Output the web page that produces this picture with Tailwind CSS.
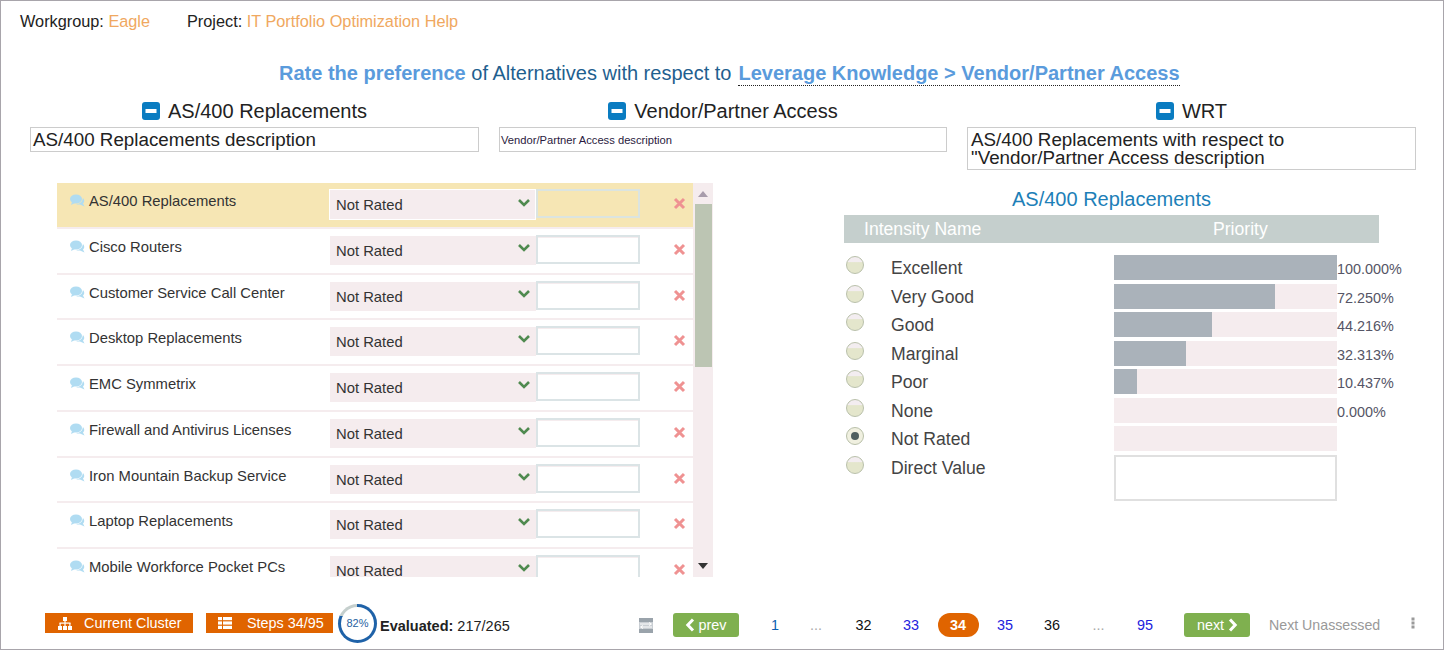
<!doctype html>
<html><head><meta charset="utf-8"><script src="https://cdn.jsdelivr.net/npm/@tailwindcss/browser@4"></script></head>
<body class="m-0">
<div class="w-[1444px] h-[650px] overflow-hidden border border-[#a8a5ab] bg-white font-['Liberation_Sans',Arial,sans-serif] text-[#222] flex flex-col">
  <div class="h-[39px] pl-[19px] pt-[10px] text-[16.3px] leading-[20px] flex">
    <span class="w-[167px]">Workgroup: <span class="text-[#f0a860]">Eagle</span></span>
    <span>Project: <span class="text-[#f0a860]">IT Portfolio Optimization Help</span></span>
  </div>
  <div class="h-[47px] pt-[22px] pl-[278px] text-[20px] leading-[23px] text-[#1f5f8f] flex">
    <span class="whitespace-pre"><b class="text-[#5a9bdc]">Rate the preference</b> of Alternatives with respect to</span>
    <b class="text-[#5a9bdc] ml-[7px] h-[24px] border-b border-dotted border-[#222]">Leverage Knowledge &gt; Vendor/Partner Access</b>
  </div>
  <div class="grid grid-cols-[449px_448px_449px] gap-x-[20px] pl-[29px]">
    <div class="flex justify-center items-center h-[40px] pt-[9px] text-[20px] gap-[8px]">
      <svg width="18" height="18" viewBox="0 0 18 18"><rect width="18" height="18" rx="3" fill="#0a7cc1"/><rect x="3.5" y="7" width="11" height="4" fill="#fff"/></svg><span>AS/400 Replacements</span>
    </div>
    <div class="flex justify-center items-center h-[40px] pt-[9px] text-[20px] gap-[8px]">
      <svg width="18" height="18" viewBox="0 0 18 18"><rect width="18" height="18" rx="3" fill="#0a7cc1"/><rect x="3.5" y="7" width="11" height="4" fill="#fff"/></svg><span>Vendor/Partner Access</span>
    </div>
    <div class="flex justify-center items-center h-[40px] pt-[9px] text-[20px] gap-[8px]">
      <svg width="18" height="18" viewBox="0 0 18 18"><rect width="18" height="18" rx="3" fill="#0a7cc1"/><rect x="3.5" y="7" width="11" height="4" fill="#fff"/></svg><span>WRT</span>
    </div>
    <div class="h-[25px] border border-[#ccc] px-[2px] text-[18.8px] leading-[23px]">AS/400 Replacements description</div>
    <div class="h-[25px] border border-[#ccc] pl-[1px] text-[11.2px] leading-[25px] text-[#2a1a40]">Vendor/Partner Access description</div>
    <div class="h-[43px] border border-[#ccc] px-[3px] text-[18.8px] leading-[18px] pt-[3px]">AS/400 Replacements with respect to<br>"Vendor/Partner Access description</div>
  </div>
  <div class="flex h-[430px] mt-[13.25px]">
    <div class="ml-[56px] w-[656px] h-[393.75px] flex overflow-hidden">
      <div class="w-[636px]">
        <div class="h-[45.75px] border-b-2 border-[#f5ecee] bg-[#f6e6b4] relative flex">
          <div class="w-[272px] pl-[13px] pt-[10px] flex text-[14.8px] leading-[17px] text-[#333]"><svg class="mr-[4px] mt-[1px] shrink-0" width="15" height="13" viewBox="0 0 15 13"><ellipse cx="6" cy="5" rx="6" ry="4.6" fill="#b0dcf2"/><path d="M2 8 L1 11 L5 9Z" fill="#b0dcf2"/><path d="M13 4 Q15.5 7 13 9.5 L14.5 12.5 L10 10.5 Q7 10.5 6 10 Q12 10 13 4Z" fill="#b0dcf2"/></svg><span>AS/400 Replacements</span></div>
          <div class="mt-[6px] h-[31px] w-[207px] border border-white bg-[#f5ecee] pl-[6px] text-[14.8px] leading-[30px] text-[#333] relative">Not Rated<svg class="absolute left-[187px] top-[8px]" width="14" height="10" viewBox="0 0 14 10"><path d="M2 2 L7 7 L12 2" fill="none" stroke="#4f8a4f" stroke-width="2.6"/></svg></div>
          <div class="mt-[6px] h-[29px] w-[104px] border-2 border-[#dbe4e0]"></div>
          <div class="flex-1 flex pt-[14px] pl-[33px]"><svg width="13" height="13" viewBox="0 0 13 13"><path d="M2 2 L11 11 M11 2 L2 11" stroke="#ef9292" stroke-width="3"/></svg></div>
        </div>
        <div class="h-[45.75px] border-b-2 border-[#f5ecee] relative flex">
          <div class="w-[273px] pl-[13px] pt-[10px] flex text-[14.8px] leading-[17px] text-[#333]"><svg class="mr-[4px] mt-[1px] shrink-0" width="15" height="13" viewBox="0 0 15 13"><ellipse cx="6" cy="5" rx="6" ry="4.6" fill="#b0dcf2"/><path d="M2 8 L1 11 L5 9Z" fill="#b0dcf2"/><path d="M13 4 Q15.5 7 13 9.5 L14.5 12.5 L10 10.5 Q7 10.5 6 10 Q12 10 13 4Z" fill="#b0dcf2"/></svg><span>Cisco Routers</span></div>
          <div class="mt-[7px] h-[29px] w-[206px] bg-[#f5ecee] pl-[6px] text-[14.8px] leading-[30px] text-[#333] relative">Not Rated<svg class="absolute left-[187px] top-[7px]" width="14" height="10" viewBox="0 0 14 10"><path d="M2 2 L7 7 L12 2" fill="none" stroke="#4f8a4f" stroke-width="2.6"/></svg></div>
          <div class="mt-[6px] h-[29px] w-[104px] border-2 border-[#dbe4e6] bg-white shadow-[inset_0_1px_0_#f5ecee]"></div>
          <div class="flex-1 flex pt-[14px] pl-[33px]"><svg width="13" height="13" viewBox="0 0 13 13"><path d="M2 2 L11 11 M11 2 L2 11" stroke="#ef9292" stroke-width="3"/></svg></div>
        </div>
        <div class="h-[45.75px] border-b-2 border-[#f5ecee] relative flex">
          <div class="w-[273px] pl-[13px] pt-[10px] flex text-[14.8px] leading-[17px] text-[#333]"><svg class="mr-[4px] mt-[1px] shrink-0" width="15" height="13" viewBox="0 0 15 13"><ellipse cx="6" cy="5" rx="6" ry="4.6" fill="#b0dcf2"/><path d="M2 8 L1 11 L5 9Z" fill="#b0dcf2"/><path d="M13 4 Q15.5 7 13 9.5 L14.5 12.5 L10 10.5 Q7 10.5 6 10 Q12 10 13 4Z" fill="#b0dcf2"/></svg><span>Customer Service Call Center</span></div>
          <div class="mt-[7px] h-[29px] w-[206px] bg-[#f5ecee] pl-[6px] text-[14.8px] leading-[30px] text-[#333] relative">Not Rated<svg class="absolute left-[187px] top-[7px]" width="14" height="10" viewBox="0 0 14 10"><path d="M2 2 L7 7 L12 2" fill="none" stroke="#4f8a4f" stroke-width="2.6"/></svg></div>
          <div class="mt-[6px] h-[29px] w-[104px] border-2 border-[#dbe4e6] bg-white shadow-[inset_0_1px_0_#f5ecee]"></div>
          <div class="flex-1 flex pt-[14px] pl-[33px]"><svg width="13" height="13" viewBox="0 0 13 13"><path d="M2 2 L11 11 M11 2 L2 11" stroke="#ef9292" stroke-width="3"/></svg></div>
        </div>
        <div class="h-[45.75px] border-b-2 border-[#f5ecee] relative flex">
          <div class="w-[273px] pl-[13px] pt-[10px] flex text-[14.8px] leading-[17px] text-[#333]"><svg class="mr-[4px] mt-[1px] shrink-0" width="15" height="13" viewBox="0 0 15 13"><ellipse cx="6" cy="5" rx="6" ry="4.6" fill="#b0dcf2"/><path d="M2 8 L1 11 L5 9Z" fill="#b0dcf2"/><path d="M13 4 Q15.5 7 13 9.5 L14.5 12.5 L10 10.5 Q7 10.5 6 10 Q12 10 13 4Z" fill="#b0dcf2"/></svg><span>Desktop Replacements</span></div>
          <div class="mt-[7px] h-[29px] w-[206px] bg-[#f5ecee] pl-[6px] text-[14.8px] leading-[30px] text-[#333] relative">Not Rated<svg class="absolute left-[187px] top-[7px]" width="14" height="10" viewBox="0 0 14 10"><path d="M2 2 L7 7 L12 2" fill="none" stroke="#4f8a4f" stroke-width="2.6"/></svg></div>
          <div class="mt-[6px] h-[29px] w-[104px] border-2 border-[#dbe4e6] bg-white shadow-[inset_0_1px_0_#f5ecee]"></div>
          <div class="flex-1 flex pt-[14px] pl-[33px]"><svg width="13" height="13" viewBox="0 0 13 13"><path d="M2 2 L11 11 M11 2 L2 11" stroke="#ef9292" stroke-width="3"/></svg></div>
        </div>
        <div class="h-[45.75px] border-b-2 border-[#f5ecee] relative flex">
          <div class="w-[273px] pl-[13px] pt-[10px] flex text-[14.8px] leading-[17px] text-[#333]"><svg class="mr-[4px] mt-[1px] shrink-0" width="15" height="13" viewBox="0 0 15 13"><ellipse cx="6" cy="5" rx="6" ry="4.6" fill="#b0dcf2"/><path d="M2 8 L1 11 L5 9Z" fill="#b0dcf2"/><path d="M13 4 Q15.5 7 13 9.5 L14.5 12.5 L10 10.5 Q7 10.5 6 10 Q12 10 13 4Z" fill="#b0dcf2"/></svg><span>EMC Symmetrix</span></div>
          <div class="mt-[7px] h-[29px] w-[206px] bg-[#f5ecee] pl-[6px] text-[14.8px] leading-[30px] text-[#333] relative">Not Rated<svg class="absolute left-[187px] top-[7px]" width="14" height="10" viewBox="0 0 14 10"><path d="M2 2 L7 7 L12 2" fill="none" stroke="#4f8a4f" stroke-width="2.6"/></svg></div>
          <div class="mt-[6px] h-[29px] w-[104px] border-2 border-[#dbe4e6] bg-white shadow-[inset_0_1px_0_#f5ecee]"></div>
          <div class="flex-1 flex pt-[14px] pl-[33px]"><svg width="13" height="13" viewBox="0 0 13 13"><path d="M2 2 L11 11 M11 2 L2 11" stroke="#ef9292" stroke-width="3"/></svg></div>
        </div>
        <div class="h-[45.75px] border-b-2 border-[#f5ecee] relative flex">
          <div class="w-[273px] pl-[13px] pt-[10px] flex text-[14.8px] leading-[17px] text-[#333]"><svg class="mr-[4px] mt-[1px] shrink-0" width="15" height="13" viewBox="0 0 15 13"><ellipse cx="6" cy="5" rx="6" ry="4.6" fill="#b0dcf2"/><path d="M2 8 L1 11 L5 9Z" fill="#b0dcf2"/><path d="M13 4 Q15.5 7 13 9.5 L14.5 12.5 L10 10.5 Q7 10.5 6 10 Q12 10 13 4Z" fill="#b0dcf2"/></svg><span>Firewall and Antivirus Licenses</span></div>
          <div class="mt-[7px] h-[29px] w-[206px] bg-[#f5ecee] pl-[6px] text-[14.8px] leading-[30px] text-[#333] relative">Not Rated<svg class="absolute left-[187px] top-[7px]" width="14" height="10" viewBox="0 0 14 10"><path d="M2 2 L7 7 L12 2" fill="none" stroke="#4f8a4f" stroke-width="2.6"/></svg></div>
          <div class="mt-[6px] h-[29px] w-[104px] border-2 border-[#dbe4e6] bg-white shadow-[inset_0_1px_0_#f5ecee]"></div>
          <div class="flex-1 flex pt-[14px] pl-[33px]"><svg width="13" height="13" viewBox="0 0 13 13"><path d="M2 2 L11 11 M11 2 L2 11" stroke="#ef9292" stroke-width="3"/></svg></div>
        </div>
        <div class="h-[45.75px] border-b-2 border-[#f5ecee] relative flex">
          <div class="w-[273px] pl-[13px] pt-[10px] flex text-[14.8px] leading-[17px] text-[#333]"><svg class="mr-[4px] mt-[1px] shrink-0" width="15" height="13" viewBox="0 0 15 13"><ellipse cx="6" cy="5" rx="6" ry="4.6" fill="#b0dcf2"/><path d="M2 8 L1 11 L5 9Z" fill="#b0dcf2"/><path d="M13 4 Q15.5 7 13 9.5 L14.5 12.5 L10 10.5 Q7 10.5 6 10 Q12 10 13 4Z" fill="#b0dcf2"/></svg><span>Iron Mountain Backup Service</span></div>
          <div class="mt-[7px] h-[29px] w-[206px] bg-[#f5ecee] pl-[6px] text-[14.8px] leading-[30px] text-[#333] relative">Not Rated<svg class="absolute left-[187px] top-[7px]" width="14" height="10" viewBox="0 0 14 10"><path d="M2 2 L7 7 L12 2" fill="none" stroke="#4f8a4f" stroke-width="2.6"/></svg></div>
          <div class="mt-[6px] h-[29px] w-[104px] border-2 border-[#dbe4e6] bg-white shadow-[inset_0_1px_0_#f5ecee]"></div>
          <div class="flex-1 flex pt-[14px] pl-[33px]"><svg width="13" height="13" viewBox="0 0 13 13"><path d="M2 2 L11 11 M11 2 L2 11" stroke="#ef9292" stroke-width="3"/></svg></div>
        </div>
        <div class="h-[45.75px] border-b-2 border-[#f5ecee] relative flex">
          <div class="w-[273px] pl-[13px] pt-[10px] flex text-[14.8px] leading-[17px] text-[#333]"><svg class="mr-[4px] mt-[1px] shrink-0" width="15" height="13" viewBox="0 0 15 13"><ellipse cx="6" cy="5" rx="6" ry="4.6" fill="#b0dcf2"/><path d="M2 8 L1 11 L5 9Z" fill="#b0dcf2"/><path d="M13 4 Q15.5 7 13 9.5 L14.5 12.5 L10 10.5 Q7 10.5 6 10 Q12 10 13 4Z" fill="#b0dcf2"/></svg><span>Laptop Replacements</span></div>
          <div class="mt-[7px] h-[29px] w-[206px] bg-[#f5ecee] pl-[6px] text-[14.8px] leading-[30px] text-[#333] relative">Not Rated<svg class="absolute left-[187px] top-[7px]" width="14" height="10" viewBox="0 0 14 10"><path d="M2 2 L7 7 L12 2" fill="none" stroke="#4f8a4f" stroke-width="2.6"/></svg></div>
          <div class="mt-[6px] h-[29px] w-[104px] border-2 border-[#dbe4e6] bg-white shadow-[inset_0_1px_0_#f5ecee]"></div>
          <div class="flex-1 flex pt-[14px] pl-[33px]"><svg width="13" height="13" viewBox="0 0 13 13"><path d="M2 2 L11 11 M11 2 L2 11" stroke="#ef9292" stroke-width="3"/></svg></div>
        </div>
        <div class="h-[45.75px] border-b-2 border-[#f5ecee] relative flex">
          <div class="w-[273px] pl-[13px] pt-[10px] flex text-[14.8px] leading-[17px] text-[#333]"><svg class="mr-[4px] mt-[1px] shrink-0" width="15" height="13" viewBox="0 0 15 13"><ellipse cx="6" cy="5" rx="6" ry="4.6" fill="#b0dcf2"/><path d="M2 8 L1 11 L5 9Z" fill="#b0dcf2"/><path d="M13 4 Q15.5 7 13 9.5 L14.5 12.5 L10 10.5 Q7 10.5 6 10 Q12 10 13 4Z" fill="#b0dcf2"/></svg><span>Mobile Workforce Pocket PCs</span></div>
          <div class="mt-[7px] h-[29px] w-[206px] bg-[#f5ecee] pl-[6px] text-[14.8px] leading-[30px] text-[#333] relative">Not Rated<svg class="absolute left-[187px] top-[7px]" width="14" height="10" viewBox="0 0 14 10"><path d="M2 2 L7 7 L12 2" fill="none" stroke="#4f8a4f" stroke-width="2.6"/></svg></div>
          <div class="mt-[6px] h-[29px] w-[104px] border-2 border-[#dbe4e6] bg-white shadow-[inset_0_1px_0_#f5ecee]"></div>
          <div class="flex-1 flex pt-[14px] pl-[33px]"><svg width="13" height="13" viewBox="0 0 13 13"><path d="M2 2 L11 11 M11 2 L2 11" stroke="#ef9292" stroke-width="3"/></svg></div>
        </div>
      </div>
      <div class="w-[20px] bg-[#f5ecee] flex flex-col items-center">
        <div class="h-[21px] flex items-center"><svg width="10" height="6" viewBox="0 0 10 6"><path d="M0 6 L5 0 L10 6Z" fill="#a89cab"/></svg></div>
        <div class="h-[163px] w-[17px] bg-[#bcc5b3]"></div>
        <div class="flex-1 flex items-end pb-[8px]"><svg width="10" height="6" viewBox="0 0 10 6"><path d="M0 0 L5 6 L10 0Z" fill="#333"/></svg></div>
      </div>
    </div>
    <div class="ml-[131px] w-[560px]">
      <div class="w-[535px] text-center text-[20px] leading-[23px] text-[#1d7fb8] pt-[5px] h-[32px]">AS/400 Replacements</div>
      <div class="w-[535px] h-[28px] bg-[#c5cfcd] text-white text-[17.6px] leading-[28px] flex"><span class="pl-[20px] w-[369px]">Intensity Name</span><span>Priority</span></div>
      <div class="mt-[12.3px] flex flex-col">
        <div class="h-[28.5px] flex">
          <div class="w-[47px] pl-[2px] pt-[1px]"><div class="w-[18px] h-[18px] rounded-full border border-[#b9c0aa] bg-[linear-gradient(#f3edf0_30%,#e4e6cc_35%)]"></div></div>
          <div class="w-[223px] text-[17.6px] leading-[24px] text-[#444] pt-[1px]">Excellent</div>
          <div class="w-[223px] h-[25px] bg-[#f5ecee]"><div class="h-full w-[100%] bg-[#aab2ba]"></div></div>
          <div class="text-[14.4px] leading-[28px] text-[#556]">100.000%</div>
        </div>
        <div class="h-[28.5px] flex">
          <div class="w-[47px] pl-[2px] pt-[1px]"><div class="w-[18px] h-[18px] rounded-full border border-[#b9c0aa] bg-[linear-gradient(#f3edf0_30%,#e4e6cc_35%)]"></div></div>
          <div class="w-[223px] text-[17.6px] leading-[24px] text-[#444] pt-[1px]">Very Good</div>
          <div class="w-[223px] h-[25px] bg-[#f5ecee]"><div class="h-full w-[72.25%] bg-[#aab2ba]"></div></div>
          <div class="text-[14.4px] leading-[28px] text-[#556]">72.250%</div>
        </div>
        <div class="h-[28.5px] flex">
          <div class="w-[47px] pl-[2px] pt-[1px]"><div class="w-[18px] h-[18px] rounded-full border border-[#b9c0aa] bg-[linear-gradient(#f3edf0_30%,#e4e6cc_35%)]"></div></div>
          <div class="w-[223px] text-[17.6px] leading-[24px] text-[#444] pt-[1px]">Good</div>
          <div class="w-[223px] h-[25px] bg-[#f5ecee]"><div class="h-full w-[44%] bg-[#aab2ba]"></div></div>
          <div class="text-[14.4px] leading-[28px] text-[#556]">44.216%</div>
        </div>
        <div class="h-[28.5px] flex">
          <div class="w-[47px] pl-[2px] pt-[1px]"><div class="w-[18px] h-[18px] rounded-full border border-[#b9c0aa] bg-[linear-gradient(#f3edf0_30%,#e4e6cc_35%)]"></div></div>
          <div class="w-[223px] text-[17.6px] leading-[24px] text-[#444] pt-[1px]">Marginal</div>
          <div class="w-[223px] h-[25px] bg-[#f5ecee]"><div class="h-full w-[32.3%] bg-[#aab2ba]"></div></div>
          <div class="text-[14.4px] leading-[28px] text-[#556]">32.313%</div>
        </div>
        <div class="h-[28.5px] flex">
          <div class="w-[47px] pl-[2px] pt-[1px]"><div class="w-[18px] h-[18px] rounded-full border border-[#b9c0aa] bg-[linear-gradient(#f3edf0_30%,#e4e6cc_35%)]"></div></div>
          <div class="w-[223px] text-[17.6px] leading-[24px] text-[#444] pt-[1px]">Poor</div>
          <div class="w-[223px] h-[25px] bg-[#f5ecee]"><div class="h-full w-[10.4%] bg-[#aab2ba]"></div></div>
          <div class="text-[14.4px] leading-[28px] text-[#556]">10.437%</div>
        </div>
        <div class="h-[28.5px] flex">
          <div class="w-[47px] pl-[2px] pt-[1px]"><div class="w-[18px] h-[18px] rounded-full border border-[#b9c0aa] bg-[linear-gradient(#f3edf0_30%,#e4e6cc_35%)]"></div></div>
          <div class="w-[223px] text-[17.6px] leading-[24px] text-[#444] pt-[1px]">None</div>
          <div class="w-[223px] h-[25px] bg-[#f5ecee]"></div>
          <div class="text-[14.4px] leading-[28px] text-[#556]">0.000%</div>
        </div>
        <div class="h-[28.5px] flex">
          <div class="w-[47px] pl-[2px] pt-[1px]"><div class="w-[18px] h-[18px] rounded-full border border-[#b9c0aa] bg-[#f0f0e0] flex items-center justify-center"><div class="w-[8px] h-[8px] rounded-full bg-[#4f5f5f]"></div></div></div>
          <div class="w-[223px] text-[17.6px] leading-[24px] text-[#444] pt-[1px]">Not Rated</div>
          <div class="w-[223px] h-[25px] bg-[#f5ecee]"></div>
        </div>
        <div class="h-[28.5px] flex">
          <div class="w-[47px] pl-[2px] pt-[1px]"><div class="w-[18px] h-[18px] rounded-full border border-[#b9c0aa] bg-[linear-gradient(#f3edf0_30%,#e4e6cc_35%)]"></div></div>
          <div class="w-[223px] text-[17.6px] leading-[24px] text-[#444] pt-[1px]">Direct Value</div>
          <div class="w-[223px] h-[46px] border-2 border-[#e0e0e0] bg-white"></div>
        </div>
      </div>
    </div>
  </div>
  <div class="h-[40px] -mt-[2.25px] flex items-start pl-[44px]">
    <div class="mt-[4px] w-[148px] h-[20px] bg-[#e06400] text-white text-[14.4px] leading-[20px] flex items-center pl-[13px] gap-[12px]"><svg width="14" height="13" viewBox="0 0 14 13" fill="#fff"><rect x="5" y="0" width="4" height="4"/><rect x="6.4" y="4" width="1.2" height="2"/><rect x="1.5" y="5.5" width="11" height="1.2"/><rect x="1.5" y="6" width="1.2" height="3"/><rect x="11.3" y="6" width="1.2" height="3"/><rect x="6.4" y="6" width="1.2" height="3"/><rect x="0" y="9" width="4" height="4"/><rect x="5" y="9" width="4" height="4"/><rect x="10" y="9" width="4" height="4"/></svg><span>Current Cluster</span></div>
    <div class="ml-[13px] mt-[4px] w-[127px] h-[20px] bg-[#e06400] text-white text-[14.4px] leading-[20px] flex items-center pl-[12px] gap-[15px]"><svg width="14" height="12" viewBox="0 0 14 12" fill="#fff"><rect x="0" y="0" width="4" height="3.2"/><rect x="5" y="0" width="9" height="3.2"/><rect x="0" y="4.4" width="4" height="3.2"/><rect x="5" y="4.4" width="9" height="3.2"/><rect x="0" y="8.8" width="4" height="3.2"/><rect x="5" y="8.8" width="9" height="3.2"/></svg><span>Steps 34/95</span></div>
    <div class="ml-[5px] -mt-[5px] w-[39px] h-[39px] rounded-full bg-[conic-gradient(#1f62a8_82%,#c5cfcd_82%)] flex items-center justify-center"><div class="w-[33px] h-[33px] rounded-full bg-white text-[11px] text-center leading-[33px] text-[#1f5f9f]">82%</div></div>
    <div class="ml-[3px] mt-[7px] text-[14.5px] leading-[20px] w-[259px] text-[#222]"><b>Evaluated:</b> 217/265</div>
    <svg class="mt-[9px] mr-[20px]" width="14" height="15" viewBox="0 0 14 15"><rect x="0" y="0" width="14" height="4" fill="#9aa3ab"/><rect x="0" y="11" width="14" height="4" fill="#9aa3ab"/><rect x="0" y="4" width="14" height="7" fill="#c9ced3"/><path d="M1 6 H12 M10 4.5 L12.5 6 L10 7.5 M13 9 H2 M4 7.5 L1.5 9 L4 10.5" fill="none" stroke="#fff" stroke-width="1"/></svg>
    <div class="mt-[4px] w-[66px] h-[24px] rounded-[3px] bg-[#7fb04f] text-white text-[14.4px] leading-[24px] flex items-center justify-center gap-[4px] pr-[1px]"><svg width="10" height="14" viewBox="0 0 10 14"><path d="M8 1.5 L2.8 7 L8 12.5" fill="none" stroke="#fff" stroke-width="3"/></svg><span>prev</span></div>
    <div class="mt-[4px] ml-[12.5px] flex text-[14.4px] leading-[24px] text-center">
      <span class="w-[47px] text-[#0b5fb0]">1</span>
      <span class="w-[41px] pr-[6px] text-[#aaa]">...</span>
      <span class="w-[48px] text-[#111]">32</span>
      <span class="w-[47px] text-[#2222dd]">33</span>
      <span class="w-[47px] flex justify-center"><b class="w-[41px] h-[24px] rounded-full bg-[#e06400] text-white">34</b></span>
      <span class="w-[47px] text-[#2222dd]">35</span>
      <span class="w-[47px] text-[#111]">36</span>
      <span class="w-[46px] text-[#aaa]">...</span>
      <span class="w-[47px] text-[#2222dd]">95</span>
    </div>
    <div class="mt-[4px] ml-[15.5px] w-[66px] h-[24px] rounded-[3px] bg-[#7fb04f] text-white text-[14.4px] leading-[24px] flex items-center justify-center gap-[4px] pl-[1px]"><span>next</span><svg width="10" height="14" viewBox="0 0 10 14"><path d="M2 1.5 L7.2 7 L2 12.5" fill="none" stroke="#fff" stroke-width="3"/></svg></div>
    <div class="mt-[4px] ml-[19px] w-[142px] text-[14.2px] leading-[24px] text-[#999]">Next Unassessed</div>
    <svg class="mt-[8px]" width="4" height="12" viewBox="0 0 4 12" fill="#9a9a9a"><rect x="0.5" y="0.5" width="3" height="3"/><rect x="0.5" y="4.5" width="3" height="3"/><rect x="0.5" y="8.5" width="3" height="3"/></svg>
  </div>
</div>
</body></html>
